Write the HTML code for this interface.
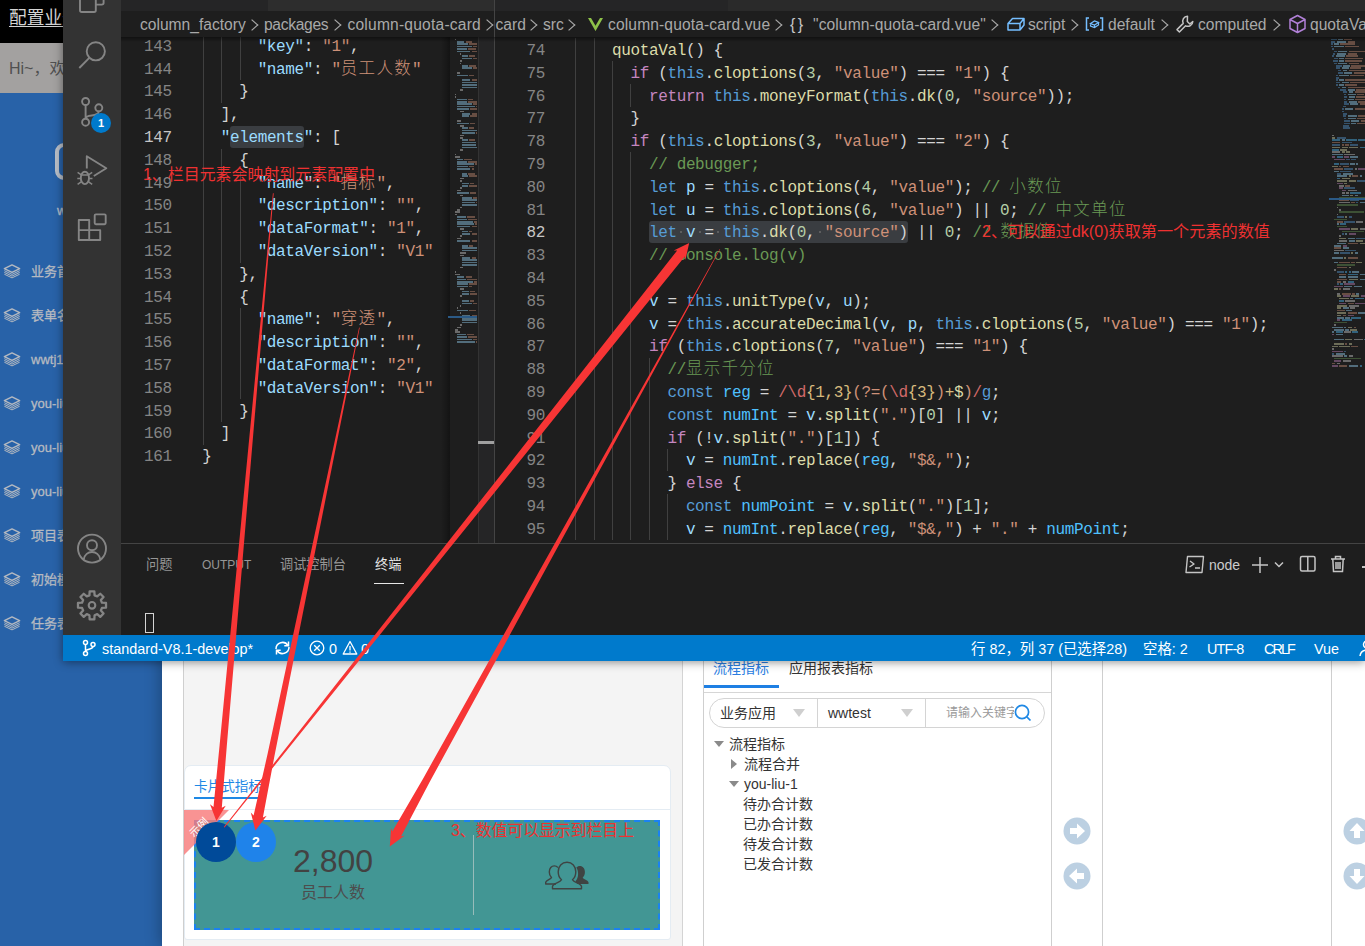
<!DOCTYPE html>
<html lang="zh-CN">
<head>
<meta charset="utf-8">
<title>column-quota-card</title>
<style>
html,body{margin:0;padding:0}
body{width:1365px;height:946px;overflow:hidden;position:relative;background:#fff;font-family:"Liberation Sans","Noto Sans CJK SC",sans-serif}
div,span,i,svg{box-sizing:border-box}
.abs{position:absolute}
/* ---------- web app behind ---------- */
#app{position:absolute;left:0;top:0;width:1365px;height:946px;overflow:hidden;background:#fff}
#topbar{position:absolute;left:0;top:0;width:1365px;height:43px;background:#000;color:#d4d4d4;font-size:17.7px;line-height:37px;text-decoration:underline;text-underline-offset:2px;padding-left:9px;white-space:nowrap}
#hibar{position:absolute;left:0;top:43px;width:1365px;height:49.500px;background:#a3a1a0;color:#505050;font-size:16px;line-height:51px;padding-left:9px;white-space:nowrap}
#side{position:absolute;left:0;top:92.500px;width:162px;height:854px;background:#2862a8}
.si{position:absolute;left:2px;height:20px;white-space:nowrap;color:#b6bac1;font-size:13px;line-height:20px;-webkit-text-stroke:.3px #b6bac1}
.si svg{position:absolute;left:.7px;top:3px}
.si span{position:absolute;left:29px;top:1px}
#dlg{position:absolute;left:162px;top:600px;width:1203px;height:346px;background:#fff;box-shadow:-2px 0 14px rgba(0,0,0,.28)}
.vline{position:absolute;top:0;width:1px;height:346px;background:#dcdfe3}
/* ---------- vscode ---------- */
#vsc{position:absolute;left:63px;top:0;width:1302px;height:661px;background:#1e1e1e;box-shadow:0 1px 9px rgba(0,0,0,.45);overflow:visible}
#vi{position:absolute;left:-63px;top:0;width:1365px;height:661px;overflow:hidden;font-family:"Liberation Sans","Noto Sans CJK SC",sans-serif}
#act{position:absolute;left:63px;top:0;width:58px;height:635px;background:#333}
#tabs{position:absolute;left:121px;top:0;width:1244px;height:11px;background:#252526}
#bc{position:absolute;left:121px;top:11px;width:1244px;height:26px;background:#1e1e1e}
.b{position:absolute;top:12px;height:26px;line-height:26px;font-size:15.6px;color:#a9a9a9;white-space:nowrap}
.cv{position:absolute;top:21.3px;width:8px;height:8px;border-right:1.6px solid #a9a9a9;border-top:1.6px solid #a9a9a9;transform:scaleX(1.15) rotate(45deg)}
.ln{position:absolute;width:60px;text-align:right;height:22.8px;line-height:22.8px;font-family:"Liberation Mono",monospace;font-size:16px;letter-spacing:-.362px;color:#858585;white-space:pre}
.ln.act{color:#c6c6c6}
.cl{position:absolute;height:22.8px;line-height:22.8px;font-family:"Liberation Mono","Noto Sans CJK SC",monospace;font-size:16px;letter-spacing:-.362px;color:#d4d4d4;white-space:pre}
.cl .k{color:#c586c0}.cl .t{color:#569cd6}.cl .f{color:#dcdcaa}.cl .v{color:#9cdcfe}.cl .c{color:#4fc1ff}
.cl .s{color:#ce9178}.cl .n{color:#b5cea8}.cl .m{color:#6a9955}.cl .r{color:#d16969}.cl .y{color:#d7ba7d}
.cl .S{color:#ce9178;font-size:16.5px;letter-spacing:1.3px;font-weight:300}
.cl .M{color:#6a9955;font-size:16.5px;letter-spacing:1.3px;font-weight:300}
.cl .h{color:#9cdcfe;background:#3a3d41;border-radius:3px;padding:3.3px 0 1.2px}
.ig{position:absolute;width:1px;background:#404040}
.wd{position:absolute;width:2px;height:2px;border-radius:1px;background:#6a6a6a}
.mm{position:absolute;left:0;top:0}
.mm i{position:absolute;height:1.7px;opacity:.42}
#edL{position:absolute;left:121px;top:37px;width:373px;height:506px;overflow:hidden;background:#1e1e1e}
#edR{position:absolute;left:495px;top:37px;width:870px;height:506px;overflow:hidden;background:#1e1e1e}
#edL .in,#edR .in{position:absolute;top:-37px}
#edL .in{left:-121px}
#edR .in{left:-495px}
#panel{position:absolute;left:121px;top:543px;width:1244px;height:92px;background:#1e1e1e;border-top:1px solid #444}
.pt{position:absolute;top:555px;height:20px;line-height:20px;font-size:13.2px;color:#969696;white-space:nowrap}
#status{position:absolute;left:63px;top:635px;width:1302px;height:26px;background:#007acc}
.st{position:absolute;top:636px;height:26px;line-height:26px;font-size:14.4px;color:#fff;white-space:nowrap}
#anno{position:absolute;left:0;top:0;width:1365px;height:946px;pointer-events:none}
</style>
</head>
<body>
<!-- =================== web application in the background =================== -->
<div id="app">
  <div id="topbar">配置业务</div>
  <div id="hibar">Hi~，欢迎</div>
  <div id="side">
    <div class="abs" style="left:55px;top:50px;width:40px;height:37px;border:4px solid #b9bfc8;border-radius:9px"></div>
    <div class="abs" style="left:57px;top:110px;color:#b3bcc9;font-size:13px;-webkit-text-stroke:.35px #b3bcc9">wwtj</div>
  </div>
<div class="si" style="top:261px"><svg width="18" height="14.500" viewBox="0 0 20 16.500" preserveAspectRatio="none"><path d="M10 1 L18.5 5.2 L10 9.4 L1.5 5.2 Z" fill="none" stroke="#b4b9c1" stroke-width="1.6" stroke-linejoin="round"/><path d="M1.500 7.600 L10 11.800 L18.500 7.600 M1.500 9.600 L10 13.800 L18.500 9.600 M1.500 11.600 L10 15.800 L18.500 11.600" fill="none" stroke="#b4b9c1" stroke-width="1.100" stroke-linejoin="round"/></svg><span>业务首页</span></div>
<div class="si" style="top:305px"><svg width="18" height="14.500" viewBox="0 0 20 16.500" preserveAspectRatio="none"><path d="M10 1 L18.5 5.2 L10 9.4 L1.5 5.2 Z" fill="none" stroke="#b4b9c1" stroke-width="1.6" stroke-linejoin="round"/><path d="M1.500 7.600 L10 11.800 L18.500 7.600 M1.500 9.600 L10 13.800 L18.500 9.600 M1.500 11.600 L10 15.800 L18.500 11.600" fill="none" stroke="#b4b9c1" stroke-width="1.100" stroke-linejoin="round"/></svg><span>表单名称</span></div>
<div class="si" style="top:349px"><svg width="18" height="14.500" viewBox="0 0 20 16.500" preserveAspectRatio="none"><path d="M10 1 L18.5 5.2 L10 9.4 L1.5 5.2 Z" fill="none" stroke="#b4b9c1" stroke-width="1.6" stroke-linejoin="round"/><path d="M1.500 7.600 L10 11.800 L18.500 7.600 M1.500 9.600 L10 13.800 L18.500 9.600 M1.500 11.600 L10 15.800 L18.500 11.600" fill="none" stroke="#b4b9c1" stroke-width="1.100" stroke-linejoin="round"/></svg><span>wwtj1</span></div>
<div class="si" style="top:393px"><svg width="18" height="14.500" viewBox="0 0 20 16.500" preserveAspectRatio="none"><path d="M10 1 L18.5 5.2 L10 9.4 L1.5 5.2 Z" fill="none" stroke="#b4b9c1" stroke-width="1.6" stroke-linejoin="round"/><path d="M1.500 7.600 L10 11.800 L18.500 7.600 M1.500 9.600 L10 13.800 L18.500 9.600 M1.500 11.600 L10 15.800 L18.500 11.600" fill="none" stroke="#b4b9c1" stroke-width="1.100" stroke-linejoin="round"/></svg><span>you-liu-1</span></div>
<div class="si" style="top:437px"><svg width="18" height="14.500" viewBox="0 0 20 16.500" preserveAspectRatio="none"><path d="M10 1 L18.5 5.2 L10 9.4 L1.5 5.2 Z" fill="none" stroke="#b4b9c1" stroke-width="1.6" stroke-linejoin="round"/><path d="M1.500 7.600 L10 11.800 L18.500 7.600 M1.500 9.600 L10 13.800 L18.500 9.600 M1.500 11.600 L10 15.800 L18.500 11.600" fill="none" stroke="#b4b9c1" stroke-width="1.100" stroke-linejoin="round"/></svg><span>you-liu-2</span></div>
<div class="si" style="top:481px"><svg width="18" height="14.500" viewBox="0 0 20 16.500" preserveAspectRatio="none"><path d="M10 1 L18.5 5.2 L10 9.4 L1.5 5.2 Z" fill="none" stroke="#b4b9c1" stroke-width="1.6" stroke-linejoin="round"/><path d="M1.500 7.600 L10 11.800 L18.500 7.600 M1.500 9.600 L10 13.800 L18.500 9.600 M1.500 11.600 L10 15.800 L18.500 11.600" fill="none" stroke="#b4b9c1" stroke-width="1.100" stroke-linejoin="round"/></svg><span>you-liu-3</span></div>
<div class="si" style="top:525px"><svg width="18" height="14.500" viewBox="0 0 20 16.500" preserveAspectRatio="none"><path d="M10 1 L18.5 5.2 L10 9.4 L1.5 5.2 Z" fill="none" stroke="#b4b9c1" stroke-width="1.6" stroke-linejoin="round"/><path d="M1.500 7.600 L10 11.800 L18.500 7.600 M1.500 9.600 L10 13.800 L18.500 9.600 M1.500 11.600 L10 15.800 L18.500 11.600" fill="none" stroke="#b4b9c1" stroke-width="1.100" stroke-linejoin="round"/></svg><span>项目表</span></div>
<div class="si" style="top:569px"><svg width="18" height="14.500" viewBox="0 0 20 16.500" preserveAspectRatio="none"><path d="M10 1 L18.5 5.2 L10 9.4 L1.5 5.2 Z" fill="none" stroke="#b4b9c1" stroke-width="1.6" stroke-linejoin="round"/><path d="M1.500 7.600 L10 11.800 L18.500 7.600 M1.500 9.600 L10 13.800 L18.500 9.600 M1.500 11.600 L10 15.800 L18.500 11.600" fill="none" stroke="#b4b9c1" stroke-width="1.100" stroke-linejoin="round"/></svg><span>初始模板</span></div>
<div class="si" style="top:613px"><svg width="18" height="14.500" viewBox="0 0 20 16.500" preserveAspectRatio="none"><path d="M10 1 L18.5 5.2 L10 9.4 L1.5 5.2 Z" fill="none" stroke="#b4b9c1" stroke-width="1.6" stroke-linejoin="round"/><path d="M1.500 7.600 L10 11.800 L18.500 7.600 M1.500 9.600 L10 13.800 L18.500 9.600 M1.500 11.600 L10 15.800 L18.500 11.600" fill="none" stroke="#b4b9c1" stroke-width="1.100" stroke-linejoin="round"/></svg><span>任务表</span></div>
  <div id="dlg">
    <!-- coordinates inside #dlg: screen x-162, screen y-600 -->
    <div class="abs" style="left:21px;top:0;width:500px;height:346px;background:#f4f4f4;border-left:1px solid #cfcfcf;border-right:1px solid #d4d4d4"></div>
    <div class="abs" style="left:541px;top:0;width:349px;height:346px;background:#fff;border-left:1px solid #cfcfcf;border-right:1px solid #cfcfcf"></div>
    
    <div class="abs" style="left:940px;top:0;width:230px;height:346px;background:#fff;border-left:1px solid #cfcfcf;border-right:1px solid #cfcfcf"></div>
    
  </div>

  <!-- card tab box -->
  <div class="abs" style="left:184px;top:765px;width:487px;height:175px;background:#fff;border:1px solid #e4ecf3;border-radius:7px 7px 3px 3px"></div>
  <div class="abs" style="left:194px;top:775.5px;font-size:13.6px;line-height:22px;color:#1e88e5;white-space:nowrap">卡片式指标</div>
  <div class="abs" style="left:194px;top:797px;width:70px;height:2px;background:#1e88e5"></div>
  <div class="abs" style="left:185px;top:809px;width:485px;height:1px;background:#e4ecf3"></div>
  <!-- teal card -->
  <div class="abs" style="left:194px;top:820px;width:466px;height:110px;background:#429694;border:2px dashed #1b82f1"></div>
  <div class="abs" style="left:243px;top:842px;width:180px;text-align:center;font-size:32px;line-height:38px;color:#424242;white-space:nowrap">2,800</div>
  <div class="abs" style="left:243px;top:880.5px;width:180px;text-align:center;font-size:16px;line-height:24px;color:#4d4d4d;white-space:nowrap">员工人数</div>
  <div class="abs" style="left:473px;top:835px;width:1px;height:80px;background:#97bcba"></div>
  <svg class="abs" style="left:545px;top:861px" width="44" height="29" viewBox="0 0 44 29" fill="none" stroke="#3f4443" stroke-width="1.400" stroke-linejoin="round">
    <path d="M32.500 23h11v-1.800c-.8-2.300-5-2.700-5.800-4.700c1.400-1.300 2.200-3.300 2.200-5.600c0-3.600-2.200-6-5-6c-1.500 0-2.700.6-3.600 1.600c1.300 2 1.800 4 1.800 6.500c0 3-1 5.500-2.500 7c.6 1.400 1.600 2 1.900 3z" fill="#3f4443" stroke="none"/>
    <path d="M11 23h-10.300v-1.800c.8-2.300 5-2.700 5.800-4.700c-1.400-1.300-2.200-3.300-2.200-5.600c0-3.600 2.200-6 5-6c1.500 0 2.700.6 3.600 1.600"/>
    <path d="M7.500 27.800v-2.200c0-3.300 7.500-3.800 9-6.800c-2-1.700-3.300-4.700-3.300-8c0-5.500 3.600-9.500 8.800-9.500s8.800 4 8.800 9.500c0 3.300-1.300 6.300-3.300 8c1.500 3 9 3.500 9 6.800v2.200z"/>
  </svg>
  <!-- sample ribbon -->
  <svg class="abs" style="left:184px;top:810px" width="46" height="46" viewBox="0 0 46 46"><polygon points="0,0 45,0 0,45" fill="#f87b7b" fill-opacity=".82"/><text x="0" y="0" transform="translate(10,28) rotate(-45)" font-size="11" fill="#fff" font-family="Liberation Sans, Noto Sans CJK SC, sans-serif">示例</text></svg>
  <!-- circles -->
  <div class="abs" style="left:196px;top:822px;width:40px;height:40px;border-radius:50%;background:#004a99;color:#fff;font-weight:bold;font-size:14px;line-height:40px;text-align:center">1</div>
  <div class="abs" style="left:236px;top:822px;width:40px;height:40px;border-radius:50%;background:#1f83ea;color:#fff;font-weight:bold;font-size:14px;line-height:40px;text-align:center">2</div>

  <!-- right panel -->
  <div class="abs" style="left:713px;top:657px;font-size:14px;line-height:22px;color:#2a7de1;white-space:nowrap">流程指标</div>
  <div class="abs" style="left:789px;top:657px;font-size:14px;line-height:22px;color:#333;white-space:nowrap">应用报表指标</div>
  <div class="abs" style="left:704px;top:685px;width:75px;height:3px;background:#1e7fe3"></div>
  <div class="abs" style="left:704px;top:692px;width:347px;height:1px;background:#d6d6d6"></div>
  <div class="abs" style="left:709px;top:698px;width:336px;height:30px;border:1px solid #d4d4d4;border-radius:15px;background:#fff"></div>
  <div class="abs" style="left:817px;top:699px;width:1px;height:28px;background:#d4d4d4"></div>
  <div class="abs" style="left:925px;top:699px;width:1px;height:28px;background:#d4d4d4"></div>
  <div class="abs" style="left:720px;top:702px;font-size:14px;line-height:22px;color:#333;white-space:nowrap">业务应用</div>
  <div class="abs" style="left:793px;top:709px;width:0;height:0;border-left:6.500px solid transparent;border-right:6.500px solid transparent;border-top:8px solid #cfcfcf"></div>
  <div class="abs" style="left:828px;top:702px;font-size:14px;line-height:22px;color:#333;white-space:nowrap">wwtest</div>
  <div class="abs" style="left:901px;top:709px;width:0;height:0;border-left:6.500px solid transparent;border-right:6.500px solid transparent;border-top:8px solid #cfcfcf"></div>
  <div class="abs" style="left:946px;top:702px;width:68px;overflow:hidden;font-size:12px;line-height:22px;color:#9a9a9a;white-space:nowrap">请输入关键字</div>
  <svg class="abs" style="left:1013px;top:703px" width="20" height="20" viewBox="0 0 20 20" fill="none" stroke="#1e88e5" stroke-width="1.7"><circle cx="9" cy="9" r="6.600"/><path d="M13.800 13.800L17.500 17.500"/></svg>
  <!-- tree -->
  <div class="abs" style="left:714px;top:741px;width:0;height:0;border-left:5px solid transparent;border-right:5px solid transparent;border-top:6px solid #8a8a8a"></div>
  <div class="abs" style="left:729px;top:733px;font-size:14px;line-height:22px;color:#333;white-space:nowrap">流程指标</div>
  <div class="abs" style="left:731px;top:759px;width:0;height:0;border-top:5px solid transparent;border-bottom:5px solid transparent;border-left:6px solid #8a8a8a"></div>
  <div class="abs" style="left:744px;top:753px;font-size:14px;line-height:22px;color:#333;white-space:nowrap">流程合并</div>
  <div class="abs" style="left:729px;top:781px;width:0;height:0;border-left:5px solid transparent;border-right:5px solid transparent;border-top:6px solid #8a8a8a"></div>
  <div class="abs" style="left:744px;top:773px;font-size:14px;line-height:22px;color:#333;white-space:nowrap">you-liu-1</div>
  <div class="abs" style="left:743px;top:793px;font-size:14px;line-height:22px;color:#333;white-space:nowrap">待办合计数</div>
  <div class="abs" style="left:743px;top:813px;font-size:14px;line-height:22px;color:#333;white-space:nowrap">已办合计数</div>
  <div class="abs" style="left:743px;top:833px;font-size:14px;line-height:22px;color:#333;white-space:nowrap">待发合计数</div>
  <div class="abs" style="left:743px;top:853px;font-size:14px;line-height:22px;color:#333;white-space:nowrap">已发合计数</div>
  <!-- move buttons -->
  <svg class="abs" style="left:1063px;top:817px" width="28" height="28" viewBox="0 0 28 28"><circle cx="14" cy="14" r="13.500" fill="#bcd0e2"/><path d="M7 11h7v-4.500l8 7.500l-8 7.500v-4.500h-7z" fill="#fff"/></svg>
  <svg class="abs" style="left:1063px;top:862px" width="28" height="28" viewBox="0 0 28 28"><circle cx="14" cy="14" r="13.500" fill="#bcd0e2"/><path d="M21 11h-7v-4.500l-8 7.500l8 7.500v-4.500h7z" fill="#fff"/></svg>
  <svg class="abs" style="left:1343px;top:817px" width="28" height="28" viewBox="0 0 28 28"><circle cx="14" cy="14" r="13.500" fill="#bcd0e2"/><path d="M11 21v-7h-4.500l7.500-8l7.500 8h-4.500v7z" fill="#fff"/></svg>
  <svg class="abs" style="left:1343px;top:862px" width="28" height="28" viewBox="0 0 28 28"><circle cx="14" cy="14" r="13.500" fill="#bcd0e2"/><path d="M11 7v7h-4.500l7.500 8l7.500-8h-4.500v-7z" fill="#fff"/></svg>
</div>

<!-- =================== VS Code window =================== -->
<div id="vsc"><div id="vi">
  <div id="act">
<svg class="abs" style="left:0;top:0" width="58" height="635" viewBox="0 0 58 635" fill="none" stroke="#858585" stroke-width="1.9" stroke-linejoin="round"><path d="M17 -12v22.2a1.800 1.800 0 0 0 1.800 1.800h12.200a1.800 1.800 0 0 0 1.800-1.800v-22"/><path d="M32.800 4.600h6a1.800 1.800 0 0 0 1.800-1.800v-16"/><circle cx="32.800" cy="51.300" r="9.100"/><path d="M26.300 57.800L16.300 68"/><circle cx="22.600" cy="101.500" r="3.500"/><circle cx="22.600" cy="122.200" r="3.500"/><circle cx="35.800" cy="107.800" r="3.500"/><path d="M22.600 105v13.700M35.800 111.300c0 6.500-13.200 2-13.200 7.400"/><path d="M23.800 168.500v-12.200l19.500 12l-12.500 7.700"/><ellipse cx="21.900" cy="177.900" rx="4.100" ry="6.200"/><path d="M17.800 175h8.200M14.600 172.400l3.400 2.200M14.300 178.400h3.500M14.600 184.400l3.600-2.600M29.200 172.400l-3.400 2.200M29.500 178.400h-3.500M29.200 184.400l-3.600-2.600" stroke-width="1.500"/><path d="M15.800 220h10.400v10.100h11v9.900h-21.400zM26.200 230.100v9.900M15.800 230.100h10.400"/><rect x="31.700" y="214.400" width="11" height="9.900" rx="1.200"/><circle cx="29" cy="548.600" r="14"/><circle cx="29" cy="545.300" r="5"/><path d="M20.700 559.500c.800-5 4.500-7.500 8.300-7.500s7.500 2.500 8.300 7.500"/><path d="M26.42 595.33L26.66 591.29L31.34 591.29L31.58 595.33L34.23 596.43L37.25 593.74L40.56 597.05L37.87 600.07L38.97 602.72L43.01 602.96L43.01 607.64L38.97 607.88L37.87 610.53L40.56 613.55L37.25 616.86L34.23 614.17L31.58 615.27L31.34 619.31L26.66 619.31L26.42 615.27L23.77 614.17L20.75 616.86L17.44 613.55L20.13 610.53L19.03 607.88L14.99 607.64L14.99 602.96L19.03 602.72L20.13 600.07L17.44 597.05L20.75 593.74L23.77 596.43Z" stroke-width="2.300"/><circle cx="29" cy="605.300" r="3.300" stroke-width="2.100"/></svg>
    <div class="abs" style="left:28px;top:113px;width:20px;height:20px;border-radius:50%;background:#007acc;color:#fff;font-size:11px;font-weight:bold;line-height:20px;text-align:center">1</div>
  </div>
  <div id="tabs">
    <div class="abs" style="left:147px;top:0;width:226px;height:11px;background:#2d2d2d"></div>
    <div class="abs" style="left:607px;top:0;width:637px;height:11px;background:#2a2a2a"></div>
  </div>
  <div id="bc"></div>
  <!-- breadcrumbs, left group -->
  <div class="abs" style="left:121px;top:11px;width:373px;height:26px;overflow:hidden">
   <div class="abs" style="left:-121px;top:-11px">
    <span class="b" style="left:140px">column_factory</span><i class="cv" style="left:247.6px"></i>
    <span class="b" style="left:264px;letter-spacing:-.3px">packages</span><i class="cv" style="left:330.6px"></i>
    <span class="b" style="left:347.5px;letter-spacing:.2px">column-quota-card</span><i class="cv" style="left:483.1px"></i>
   </div>
  </div>
  <!-- breadcrumbs, right group -->
  <div class="abs" style="left:495px;top:11px;width:870px;height:26px;overflow:hidden">
   <div class="abs" style="left:-495px;top:-11px">
    <span class="b" style="left:495.5px">card</span><i class="cv" style="left:526.6px"></i>
    <span class="b" style="left:543px">src</span><i class="cv" style="left:565.1px"></i>
    <svg class="abs" style="left:587.5px;top:17.5px" width="15" height="13.500" viewBox="0 0 19 17"><path d="M0 0h3.800l5.700 9.800l5.700-9.800h3.800l-9.500 16.500z" fill="#8dc149"/><path d="M5.600 0h2.600l1.300 2.300l1.300-2.300h2.600l-3.900 6.800z" fill="#1e1e1e"/></svg>
    <span class="b" style="left:608px;letter-spacing:.13px">column-quota-card.vue</span><i class="cv" style="left:772.1px"></i>
    <span class="b" style="left:790px;color:#c5c5c5;font-size:16px;letter-spacing:2.5px">{}</span>
    <span class="b" style="left:813px;letter-spacing:.1px">"column-quota-card.vue"</span><i class="cv" style="left:988.1px"></i>
    <svg class="abs" style="left:1006px;top:14px" width="20" height="20" viewBox="0 0 20 20" fill="none" stroke="#75beff" stroke-width="1.500" stroke-linejoin="round"><path d="M6.500 4.500h11.500l-4 5h-12zM2 9.500v6.500h12v-6.500M18 4.500v6.500l-4 5"/></svg>
    <span class="b" style="left:1028px">script</span><i class="cv" style="left:1067.9px"></i>
    <svg class="abs" style="left:1085px;top:15px" width="19" height="18" viewBox="0 0 19 18" fill="none" stroke="#75beff" stroke-width="1.500"><path d="M4 3h-2.500v12h2.500M15 3h2.500v12h-2.500"/><path d="M5.500 8.500l4-2.500l4 1.500l-4 2.500zM5.500 8.500v2.500l4 1.500l4-2.500v-2.500M9.500 10v2.500" stroke-width="1.200"/></svg>
    <span class="b" style="left:1108px">default</span><i class="cv" style="left:1157.6px"></i>
    <svg class="abs" style="left:1175px;top:14px" width="20" height="20" viewBox="0 0 20 20" fill="none" stroke="#c5c5c5" stroke-width="1.500" stroke-linejoin="round"><path d="M12.500 2.200a5 5 0 0 0-4.300 7.200l-6.200 6.200l2.400 2.400l6.200-6.200a5 5 0 0 0 7.200-4.300l-3 2.500l-2.500-2.500z"/></svg>
    <span class="b" style="left:1198px">computed</span><i class="cv" style="left:1270.2px"></i>
    <svg class="abs" style="left:1288px;top:14px" width="19" height="20" viewBox="0 0 19 20" fill="none" stroke="#b180d7" stroke-width="1.500" stroke-linejoin="round"><path d="M9.500 1.500l7.500 4v9l-7.500 4l-7.500-4v-9zM2 5.500l7.500 4l7.500-4M9.500 9.500v9"/></svg>
    <span class="b" style="left:1310px">quotaVal</span>
   </div>
  </div>
  <div class="abs" style="left:494px;top:0;width:1px;height:543px;background:#444"></div>

  <!-- left editor -->
  <div id="edL"><div class="in">
<i class="ig" style="left:202.5px;top:34.6px;height:410.4px"></i>
<i class="ig" style="left:221.0px;top:34.6px;height:68.4px"></i>
<i class="ig" style="left:221.0px;top:148.6px;height:273.6px"></i>
<i class="ig" style="left:239.5px;top:34.6px;height:45.6px"></i>
<i class="ig" style="left:239.5px;top:171.4px;height:91.2px"></i>
<i class="ig" style="left:239.5px;top:308.2px;height:91.2px"></i>
<div class="ln" style="top:35.8px;left:111.8px">143</div>
<div class="cl" style="top:35.8px;left:202.2px">      <span class="v">"key"</span>: <span class="s">"1"</span>,</div>
<div class="ln" style="top:58.6px;left:111.8px">144</div>
<div class="cl" style="top:58.6px;left:202.2px">      <span class="v">"name"</span>: <span class="s">"</span><span class="S">员工人数</span><span class="s">"</span></div>
<div class="ln" style="top:81.4px;left:111.8px">145</div>
<div class="cl" style="top:81.4px;left:202.2px">    }</div>
<div class="ln" style="top:104.2px;left:111.8px">146</div>
<div class="cl" style="top:104.2px;left:202.2px">  ],</div>
<div class="ln act" style="top:127.0px;left:111.8px">147</div>
<div class="cl" style="top:127.0px;left:202.2px">  <span class="v">"</span><span class="h">elements</span><span class="v">"</span>: [</div>
<div class="ln" style="top:149.8px;left:111.8px">148</div>
<div class="cl" style="top:149.8px;left:202.2px">    {</div>
<div class="ln" style="top:172.6px;left:111.8px">149</div>
<div class="cl" style="top:172.6px;left:202.2px">      <span class="v">"name"</span>: <span class="s">"</span><span class="S">指标</span><span class="s">"</span>,</div>
<div class="ln" style="top:195.4px;left:111.8px">150</div>
<div class="cl" style="top:195.4px;left:202.2px">      <span class="v">"description"</span>: <span class="s">""</span>,</div>
<div class="ln" style="top:218.2px;left:111.8px">151</div>
<div class="cl" style="top:218.2px;left:202.2px">      <span class="v">"dataFormat"</span>: <span class="s">"1"</span>,</div>
<div class="ln" style="top:241.0px;left:111.8px">152</div>
<div class="cl" style="top:241.0px;left:202.2px">      <span class="v">"dataVersion"</span>: <span class="s">"V1"</span></div>
<div class="ln" style="top:263.8px;left:111.8px">153</div>
<div class="cl" style="top:263.8px;left:202.2px">    },</div>
<div class="ln" style="top:286.6px;left:111.8px">154</div>
<div class="cl" style="top:286.6px;left:202.2px">    {</div>
<div class="ln" style="top:309.4px;left:111.8px">155</div>
<div class="cl" style="top:309.4px;left:202.2px">      <span class="v">"name"</span>: <span class="s">"</span><span class="S">穿透</span><span class="s">"</span>,</div>
<div class="ln" style="top:332.2px;left:111.8px">156</div>
<div class="cl" style="top:332.2px;left:202.2px">      <span class="v">"description"</span>: <span class="s">""</span>,</div>
<div class="ln" style="top:355.0px;left:111.8px">157</div>
<div class="cl" style="top:355.0px;left:202.2px">      <span class="v">"dataFormat"</span>: <span class="s">"2"</span>,</div>
<div class="ln" style="top:377.8px;left:111.8px">158</div>
<div class="cl" style="top:377.8px;left:202.2px">      <span class="v">"dataVersion"</span>: <span class="s">"V1"</span></div>
<div class="ln" style="top:400.6px;left:111.8px">159</div>
<div class="cl" style="top:400.6px;left:202.2px">    }</div>
<div class="ln" style="top:423.4px;left:111.8px">160</div>
<div class="cl" style="top:423.4px;left:202.2px">  ]</div>
<div class="ln" style="top:446.2px;left:111.8px">161</div>
<div class="cl" style="top:446.2px;left:202.2px">}</div>
    <div class="abs" style="left:441px;top:37px;width:9px;height:506px;background:linear-gradient(90deg,rgba(0,0,0,0),rgba(0,0,0,.35))"></div>
    <div class="abs" style="left:450px;top:37px;width:44px;height:506px;background:#1e1e1e"></div>
<div class="mm"><i style="left:454.8px;top:38.5px;width:1.2px;background:#d4d4d4"></i><i style="left:457.2px;top:40.9px;width:7.2px;background:#9cdcfe"></i><i style="left:465.6px;top:40.9px;width:6.0px;background:#ce9178"></i><i style="left:457.2px;top:43.3px;width:10.8px;background:#9cdcfe"></i><i style="left:469.2px;top:43.3px;width:7.8px;background:#ce9178"></i><i style="left:457.2px;top:45.7px;width:14.4px;background:#9cdcfe"></i><i style="left:472.8px;top:45.7px;width:4.2px;background:#ce9178"></i><i style="left:457.2px;top:48.1px;width:9.6px;background:#9cdcfe"></i><i style="left:468.0px;top:48.1px;width:8.4px;background:#ce9178"></i><i style="left:457.2px;top:50.5px;width:13.2px;background:#9cdcfe"></i><i style="left:471.6px;top:50.5px;width:5.4px;background:#ce9178"></i><i style="left:459.6px;top:52.9px;width:1.2px;background:#d4d4d4"></i><i style="left:462.0px;top:55.3px;width:6.0px;background:#9cdcfe"></i><i style="left:469.2px;top:55.3px;width:6.0px;background:#ce9178"></i><i style="left:462.0px;top:57.7px;width:9.6px;background:#9cdcfe"></i><i style="left:472.8px;top:57.7px;width:4.2px;background:#ce9178"></i><i style="left:459.6px;top:60.1px;width:2.4px;background:#d4d4d4"></i><i style="left:459.6px;top:62.5px;width:1.2px;background:#d4d4d4"></i><i style="left:462.0px;top:64.9px;width:6.0px;background:#9cdcfe"></i><i style="left:469.2px;top:64.9px;width:7.2px;background:#ce9178"></i><i style="left:462.0px;top:67.3px;width:9.6px;background:#9cdcfe"></i><i style="left:472.8px;top:67.3px;width:4.2px;background:#ce9178"></i><i style="left:457.2px;top:72.1px;width:2.4px;background:#d4d4d4"></i><i style="left:457.2px;top:74.5px;width:10.8px;background:#9cdcfe"></i><i style="left:469.2px;top:74.5px;width:4.8px;background:#ce9178"></i><i style="left:462.0px;top:79.3px;width:8.4px;background:#9cdcfe"></i><i style="left:471.6px;top:79.3px;width:5.4px;background:#ce9178"></i><i style="left:462.0px;top:81.7px;width:15.0px;background:#9cdcfe"></i><i style="left:462.0px;top:84.1px;width:15.0px;background:#9cdcfe"></i><i style="left:462.0px;top:86.5px;width:15.0px;background:#9cdcfe"></i><i style="left:459.6px;top:88.9px;width:3.6px;background:#d4d4d4"></i><i style="left:454.8px;top:93.7px;width:1.2px;background:#d4d4d4"></i><i style="left:454.8px;top:96.1px;width:1.2px;background:#d4d4d4"></i><i style="left:457.2px;top:98.5px;width:9.6px;background:#9cdcfe"></i><i style="left:468.0px;top:98.5px;width:4.8px;background:#ce9178"></i><i style="left:457.2px;top:100.9px;width:9.6px;background:#9cdcfe"></i><i style="left:468.0px;top:100.9px;width:9.0px;background:#ce9178"></i><i style="left:457.2px;top:103.3px;width:14.4px;background:#9cdcfe"></i><i style="left:472.8px;top:103.3px;width:4.2px;background:#ce9178"></i><i style="left:457.2px;top:105.7px;width:18.0px;background:#9cdcfe"></i><i style="left:476.4px;top:105.7px;width:0.6px;background:#ce9178"></i><i style="left:457.2px;top:108.1px;width:12.0px;background:#9cdcfe"></i><i style="left:470.4px;top:108.1px;width:6.6px;background:#ce9178"></i><i style="left:459.6px;top:110.5px;width:4.8px;background:#d4d4d4"></i><i style="left:462.0px;top:112.9px;width:8.4px;background:#9cdcfe"></i><i style="left:471.6px;top:112.9px;width:5.4px;background:#ce9178"></i><i style="left:462.0px;top:115.3px;width:7.2px;background:#9cdcfe"></i><i style="left:470.4px;top:115.3px;width:6.6px;background:#ce9178"></i><i style="left:457.2px;top:120.1px;width:3.6px;background:#d4d4d4"></i><i style="left:457.2px;top:122.5px;width:12.0px;background:#9cdcfe"></i><i style="left:470.4px;top:122.5px;width:4.8px;background:#ce9178"></i><i style="left:459.6px;top:124.9px;width:4.8px;background:#d4d4d4"></i><i style="left:462.0px;top:127.3px;width:6.0px;background:#9cdcfe"></i><i style="left:469.2px;top:127.3px;width:4.8px;background:#ce9178"></i><i style="left:462.0px;top:129.7px;width:15.0px;background:#9cdcfe"></i><i style="left:462.0px;top:132.1px;width:13.2px;background:#9cdcfe"></i><i style="left:476.4px;top:132.1px;width:0.6px;background:#ce9178"></i><i style="left:459.6px;top:134.5px;width:4.8px;background:#d4d4d4"></i><i style="left:459.6px;top:136.9px;width:3.6px;background:#d4d4d4"></i><i style="left:462.0px;top:139.3px;width:6.0px;background:#9cdcfe"></i><i style="left:469.2px;top:139.3px;width:6.0px;background:#ce9178"></i><i style="left:462.0px;top:141.7px;width:14.4px;background:#9cdcfe"></i><i style="left:462.0px;top:144.1px;width:14.4px;background:#9cdcfe"></i><i style="left:462.0px;top:146.5px;width:15.0px;background:#9cdcfe"></i><i style="left:459.6px;top:148.9px;width:3.6px;background:#d4d4d4"></i><i style="left:454.8px;top:153.7px;width:1.2px;background:#d4d4d4"></i><i style="left:454.8px;top:156.1px;width:4.8px;background:#d4d4d4"></i><i style="left:457.2px;top:158.5px;width:6.0px;background:#9cdcfe"></i><i style="left:464.4px;top:158.5px;width:7.2px;background:#ce9178"></i><i style="left:457.2px;top:160.9px;width:9.6px;background:#9cdcfe"></i><i style="left:468.0px;top:160.9px;width:9.0px;background:#ce9178"></i><i style="left:457.2px;top:163.3px;width:16.8px;background:#9cdcfe"></i><i style="left:475.2px;top:163.3px;width:1.8px;background:#ce9178"></i><i style="left:457.2px;top:165.7px;width:10.8px;background:#9cdcfe"></i><i style="left:469.2px;top:165.7px;width:4.8px;background:#ce9178"></i><i style="left:457.2px;top:168.1px;width:13.2px;background:#9cdcfe"></i><i style="left:471.6px;top:168.1px;width:2.4px;background:#ce9178"></i><i style="left:462.0px;top:172.9px;width:4.8px;background:#9cdcfe"></i><i style="left:468.0px;top:172.9px;width:7.2px;background:#ce9178"></i><i style="left:462.0px;top:175.3px;width:6.0px;background:#9cdcfe"></i><i style="left:469.2px;top:175.3px;width:7.8px;background:#ce9178"></i><i style="left:459.6px;top:177.7px;width:4.8px;background:#d4d4d4"></i><i style="left:459.6px;top:180.1px;width:2.4px;background:#d4d4d4"></i><i style="left:462.0px;top:182.5px;width:7.2px;background:#9cdcfe"></i><i style="left:470.4px;top:182.5px;width:3.6px;background:#ce9178"></i><i style="left:462.0px;top:184.9px;width:6.0px;background:#9cdcfe"></i><i style="left:469.2px;top:184.9px;width:7.8px;background:#ce9178"></i><i style="left:459.6px;top:187.3px;width:2.4px;background:#d4d4d4"></i><i style="left:457.2px;top:189.7px;width:3.6px;background:#d4d4d4"></i><i style="left:457.2px;top:192.1px;width:12.0px;background:#9cdcfe"></i><i style="left:470.4px;top:192.1px;width:6.0px;background:#ce9178"></i><i style="left:459.6px;top:194.5px;width:3.6px;background:#d4d4d4"></i><i style="left:462.0px;top:196.9px;width:9.6px;background:#9cdcfe"></i><i style="left:472.8px;top:196.9px;width:4.2px;background:#ce9178"></i><i style="left:462.0px;top:199.3px;width:15.0px;background:#9cdcfe"></i><i style="left:462.0px;top:201.7px;width:13.2px;background:#9cdcfe"></i><i style="left:476.4px;top:201.7px;width:0.6px;background:#ce9178"></i><i style="left:462.0px;top:204.1px;width:15.0px;background:#9cdcfe"></i><i style="left:459.6px;top:206.5px;width:2.4px;background:#d4d4d4"></i><i style="left:457.2px;top:208.9px;width:2.4px;background:#d4d4d4"></i><i style="left:454.8px;top:211.3px;width:4.8px;background:#d4d4d4"></i><i style="left:454.8px;top:213.7px;width:2.4px;background:#d4d4d4"></i><i style="left:457.2px;top:216.1px;width:8.4px;background:#9cdcfe"></i><i style="left:466.8px;top:216.1px;width:8.4px;background:#ce9178"></i><i style="left:457.2px;top:218.5px;width:9.6px;background:#9cdcfe"></i><i style="left:468.0px;top:218.5px;width:9.0px;background:#ce9178"></i><i style="left:457.2px;top:220.9px;width:15.6px;background:#9cdcfe"></i><i style="left:474.0px;top:220.9px;width:3.0px;background:#ce9178"></i><i style="left:457.2px;top:223.3px;width:16.8px;background:#9cdcfe"></i><i style="left:475.2px;top:223.3px;width:1.8px;background:#ce9178"></i><i style="left:457.2px;top:225.7px;width:13.2px;background:#9cdcfe"></i><i style="left:471.6px;top:225.7px;width:5.4px;background:#ce9178"></i><i style="left:459.6px;top:228.1px;width:4.8px;background:#d4d4d4"></i><i style="left:462.0px;top:230.5px;width:6.0px;background:#9cdcfe"></i><i style="left:469.2px;top:230.5px;width:2.4px;background:#ce9178"></i><i style="left:462.0px;top:232.9px;width:8.4px;background:#9cdcfe"></i><i style="left:471.6px;top:232.9px;width:5.4px;background:#ce9178"></i><i style="left:459.6px;top:235.3px;width:2.4px;background:#d4d4d4"></i><i style="left:457.2px;top:237.7px;width:3.6px;background:#d4d4d4"></i><i style="left:457.2px;top:240.1px;width:13.2px;background:#9cdcfe"></i><i style="left:471.6px;top:240.1px;width:5.4px;background:#ce9178"></i><i style="left:462.0px;top:244.9px;width:6.0px;background:#9cdcfe"></i><i style="left:469.2px;top:244.9px;width:3.6px;background:#ce9178"></i><i style="left:462.0px;top:247.3px;width:15.0px;background:#9cdcfe"></i><i style="left:462.0px;top:249.7px;width:15.0px;background:#9cdcfe"></i><i style="left:459.6px;top:252.1px;width:6.0px;background:#d4d4d4"></i><i style="left:459.6px;top:254.5px;width:4.8px;background:#d4d4d4"></i><i style="left:462.0px;top:256.9px;width:8.4px;background:#9cdcfe"></i><i style="left:471.6px;top:256.9px;width:4.8px;background:#ce9178"></i><i style="left:462.0px;top:259.3px;width:15.0px;background:#9cdcfe"></i><i style="left:462.0px;top:261.7px;width:15.0px;background:#9cdcfe"></i><i style="left:462.0px;top:264.1px;width:15.0px;background:#9cdcfe"></i><i style="left:459.6px;top:266.5px;width:3.6px;background:#d4d4d4"></i><i style="left:454.8px;top:271.3px;width:1.2px;background:#d4d4d4"></i><i style="left:454.8px;top:273.7px;width:4.8px;background:#d4d4d4"></i><i style="left:457.2px;top:276.1px;width:7.2px;background:#9cdcfe"></i><i style="left:465.6px;top:276.1px;width:6.0px;background:#ce9178"></i><i style="left:457.2px;top:278.5px;width:8.4px;background:#9cdcfe"></i><i style="left:466.8px;top:278.5px;width:10.2px;background:#ce9178"></i><i style="left:457.2px;top:280.9px;width:15.6px;background:#9cdcfe"></i><i style="left:474.0px;top:280.9px;width:3.0px;background:#ce9178"></i><i style="left:457.2px;top:283.3px;width:10.8px;background:#9cdcfe"></i><i style="left:469.2px;top:283.3px;width:7.8px;background:#ce9178"></i><i style="left:457.2px;top:285.7px;width:10.8px;background:#9cdcfe"></i><i style="left:469.2px;top:285.7px;width:2.4px;background:#ce9178"></i><i style="left:459.6px;top:288.1px;width:4.8px;background:#d4d4d4"></i><i style="left:462.0px;top:290.5px;width:7.2px;background:#9cdcfe"></i><i style="left:470.4px;top:290.5px;width:4.8px;background:#ce9178"></i><i style="left:462.0px;top:292.9px;width:7.2px;background:#9cdcfe"></i><i style="left:470.4px;top:292.9px;width:6.6px;background:#ce9178"></i><i style="left:459.6px;top:295.3px;width:2.4px;background:#d4d4d4"></i><i style="left:462.0px;top:300.1px;width:7.2px;background:#9cdcfe"></i><i style="left:470.4px;top:300.1px;width:3.6px;background:#ce9178"></i><i style="left:462.0px;top:302.5px;width:9.6px;background:#9cdcfe"></i><i style="left:472.8px;top:302.5px;width:4.2px;background:#ce9178"></i><i style="left:459.6px;top:304.9px;width:1.2px;background:#d4d4d4"></i><i style="left:457.2px;top:307.3px;width:1.2px;background:#d4d4d4"></i><i style="left:457.2px;top:309.7px;width:10.8px;background:#9cdcfe"></i><i style="left:469.2px;top:309.7px;width:7.2px;background:#ce9178"></i><i style="left:459.6px;top:312.1px;width:1.2px;background:#d4d4d4"></i><i style="left:462.0px;top:314.5px;width:8.4px;background:#9cdcfe"></i><i style="left:471.6px;top:314.5px;width:5.4px;background:#ce9178"></i><i style="left:462.0px;top:316.9px;width:15.0px;background:#9cdcfe"></i><i style="left:462.0px;top:319.3px;width:15.0px;background:#9cdcfe"></i><i style="left:462.0px;top:321.7px;width:15.0px;background:#9cdcfe"></i><i style="left:459.6px;top:324.1px;width:2.4px;background:#d4d4d4"></i><i style="left:457.2px;top:326.5px;width:3.6px;background:#d4d4d4"></i><i style="left:454.8px;top:328.9px;width:3.6px;background:#d4d4d4"></i><i style="left:454.8px;top:331.3px;width:4.8px;background:#d4d4d4"></i><i style="left:457.2px;top:333.7px;width:8.4px;background:#9cdcfe"></i><i style="left:466.8px;top:333.7px;width:7.2px;background:#ce9178"></i><i style="left:457.2px;top:336.1px;width:9.6px;background:#9cdcfe"></i><i style="left:468.0px;top:336.1px;width:9.0px;background:#ce9178"></i><i style="left:457.2px;top:338.5px;width:14.4px;background:#9cdcfe"></i><i style="left:472.8px;top:338.5px;width:4.2px;background:#ce9178"></i><i style="left:457.2px;top:340.9px;width:18.0px;background:#9cdcfe"></i><i style="left:476.4px;top:340.9px;width:0.6px;background:#ce9178"></i></div>
    <div class="abs" style="left:448px;top:316px;width:29px;height:2px;background:#2b5a86"></div>
    <div class="abs" style="left:478px;top:37px;width:16px;height:506px;background:#252526;border-left:1px solid #333"></div>
    <div class="abs" style="left:478px;top:441px;width:16px;height:3px;background:#a0a0a0"></div>
  </div></div>

  <!-- right editor -->
  <div id="edR"><div class="in">
    <div class="abs" style="left:649px;top:220.7px;width:259px;height:22.800px;background:#3a3d41;border-radius:3px"></div>
<i class="wd" style="left:680.3px;top:231.1px"></i><i class="wd" style="left:698.7px;top:231.1px"></i><i class="wd" style="left:717.2px;top:231.1px"></i><i class="wd" style="left:818.9px;top:231.1px"></i>
<i class="ig" style="left:575.0px;top:38.3px;height:501.6px"></i>
<i class="ig" style="left:593.5px;top:38.3px;height:501.6px"></i>
<i class="ig" style="left:612.0px;top:61.1px;height:478.8px"></i>
<i class="ig" style="left:630.4px;top:83.9px;height:22.8px"></i>
<i class="ig" style="left:630.4px;top:152.3px;height:387.6px"></i>
<i class="ig" style="left:648.9px;top:357.5px;height:182.4px"></i>
<i class="ig" style="left:667.4px;top:448.7px;height:22.8px"></i>
<i class="ig" style="left:667.4px;top:494.3px;height:45.6px"></i>
<div class="ln" style="top:40.0px;left:485.0px">74</div>
<div class="cl" style="top:40.0px;left:575.0px">    <span class="f">quotaVal</span>() {</div>
<div class="ln" style="top:62.8px;left:485.0px">75</div>
<div class="cl" style="top:62.8px;left:575.0px">      <span class="k">if</span> (<span class="t">this</span>.<span class="f">cloptions</span>(<span class="n">3</span>, <span class="s">"value"</span>) === <span class="s">"1"</span>) {</div>
<div class="ln" style="top:85.6px;left:485.0px">76</div>
<div class="cl" style="top:85.6px;left:575.0px">        <span class="k">return</span> <span class="t">this</span>.<span class="f">moneyFormat</span>(<span class="t">this</span>.<span class="f">dk</span>(<span class="n">0</span>, <span class="s">"source"</span>));</div>
<div class="ln" style="top:108.4px;left:485.0px">77</div>
<div class="cl" style="top:108.4px;left:575.0px">      }</div>
<div class="ln" style="top:131.2px;left:485.0px">78</div>
<div class="cl" style="top:131.2px;left:575.0px">      <span class="k">if</span> (<span class="t">this</span>.<span class="f">cloptions</span>(<span class="n">3</span>, <span class="s">"value"</span>) === <span class="s">"2"</span>) {</div>
<div class="ln" style="top:154.0px;left:485.0px">79</div>
<div class="cl" style="top:154.0px;left:575.0px">        <span class="m">// debugger;</span></div>
<div class="ln" style="top:176.8px;left:485.0px">80</div>
<div class="cl" style="top:176.8px;left:575.0px">        <span class="t">let</span> <span class="v">p</span> = <span class="t">this</span>.<span class="f">cloptions</span>(<span class="n">4</span>, <span class="s">"value"</span>); <span class="m">// </span><span class="M">小数位</span></div>
<div class="ln" style="top:199.6px;left:485.0px">81</div>
<div class="cl" style="top:199.6px;left:575.0px">        <span class="t">let</span> <span class="v">u</span> = <span class="t">this</span>.<span class="f">cloptions</span>(<span class="n">6</span>, <span class="s">"value"</span>) || <span class="n">0</span>; <span class="m">// </span><span class="M">中文单位</span></div>
<div class="ln act" style="top:222.4px;left:485.0px">82</div>
<div class="cl" style="top:222.4px;left:575.0px">        <span class="t">let</span> <span class="v">v</span> = <span class="t">this</span>.<span class="f">dk</span>(<span class="n">0</span>, <span class="s">"source"</span>) || <span class="n">0</span>; <span class="m">// </span><span class="M">数据值</span></div>
<div class="ln" style="top:245.2px;left:485.0px">83</div>
<div class="cl" style="top:245.2px;left:575.0px">        <span class="m">// console.log(v)</span></div>
<div class="ln" style="top:268.0px;left:485.0px">84</div>
<div class="cl" style="top:268.0px;left:575.0px"></div>
<div class="ln" style="top:290.8px;left:485.0px">85</div>
<div class="cl" style="top:290.8px;left:575.0px">        <span class="v">v</span> = <span class="t">this</span>.<span class="f">unitType</span>(<span class="v">v</span>, <span class="v">u</span>);</div>
<div class="ln" style="top:313.6px;left:485.0px">86</div>
<div class="cl" style="top:313.6px;left:575.0px">        <span class="v">v</span> = <span class="t">this</span>.<span class="f">accurateDecimal</span>(<span class="v">v</span>, <span class="v">p</span>, <span class="t">this</span>.<span class="f">cloptions</span>(<span class="n">5</span>, <span class="s">"value"</span>) === <span class="s">"1"</span>);</div>
<div class="ln" style="top:336.4px;left:485.0px">87</div>
<div class="cl" style="top:336.4px;left:575.0px">        <span class="k">if</span> (<span class="t">this</span>.<span class="f">cloptions</span>(<span class="n">7</span>, <span class="s">"value"</span>) === <span class="s">"1"</span>) {</div>
<div class="ln" style="top:359.2px;left:485.0px">88</div>
<div class="cl" style="top:359.2px;left:575.0px">          <span class="m">//</span><span class="M">显示千分位</span></div>
<div class="ln" style="top:382.0px;left:485.0px">89</div>
<div class="cl" style="top:382.0px;left:575.0px">          <span class="t">const</span> <span class="c">reg</span> = <span class="r">/\d</span><span class="y">{1,3}</span><span class="s">(?=(</span><span class="r">\d</span><span class="y">{3}</span><span class="s">)</span><span class="y">+</span><span class="f">$</span><span class="s">)</span><span class="r">/</span><span class="t">g</span>;</div>
<div class="ln" style="top:404.8px;left:485.0px">90</div>
<div class="cl" style="top:404.8px;left:575.0px">          <span class="t">const</span> <span class="c">numInt</span> = <span class="v">v</span>.<span class="f">split</span>(<span class="s">"."</span>)[<span class="n">0</span>] || <span class="v">v</span>;</div>
<div class="ln" style="top:427.6px;left:485.0px">91</div>
<div class="cl" style="top:427.6px;left:575.0px">          <span class="k">if</span> (!<span class="v">v</span>.<span class="f">split</span>(<span class="s">"."</span>)[<span class="n">1</span>]) {</div>
<div class="ln" style="top:450.4px;left:485.0px">92</div>
<div class="cl" style="top:450.4px;left:575.0px">            <span class="v">v</span> = <span class="c">numInt</span>.<span class="f">replace</span>(<span class="c">reg</span>, <span class="s">"$&amp;,"</span>);</div>
<div class="ln" style="top:473.2px;left:485.0px">93</div>
<div class="cl" style="top:473.2px;left:575.0px">          } <span class="k">else</span> {</div>
<div class="ln" style="top:496.0px;left:485.0px">94</div>
<div class="cl" style="top:496.0px;left:575.0px">            <span class="t">const</span> <span class="c">numPoint</span> = <span class="v">v</span>.<span class="f">split</span>(<span class="s">"."</span>)[<span class="n">1</span>];</div>
<div class="ln" style="top:518.8px;left:485.0px">95</div>
<div class="cl" style="top:518.8px;left:575.0px">            <span class="v">v</span> = <span class="c">numInt</span>.<span class="f">replace</span>(<span class="c">reg</span>, <span class="s">"$&amp;,"</span>) + <span class="s">"."</span> + <span class="c">numPoint</span>;</div>
    <div class="abs" style="left:1329px;top:37px;width:36px;height:506px;background:#1e1e1e"></div>
<div class="mm"><i style="left:1330.7px;top:38.5px;width:6.0px;background:#569cd6"></i><i style="left:1337.9px;top:38.5px;width:4.8px;background:#9cdcfe"></i><i style="left:1343.9px;top:38.5px;width:8.4px;background:#ce9178"></i><i style="left:1330.7px;top:40.9px;width:4.8px;background:#569cd6"></i><i style="left:1336.7px;top:40.9px;width:9.6px;background:#9cdcfe"></i><i style="left:1347.5px;top:40.9px;width:7.2px;background:#ce9178"></i><i style="left:1330.7px;top:43.3px;width:2.4px;background:#569cd6"></i><i style="left:1334.3px;top:43.3px;width:4.8px;background:#9cdcfe"></i><i style="left:1340.3px;top:43.3px;width:14.4px;background:#ce9178"></i><i style="left:1330.7px;top:45.7px;width:2.4px;background:#569cd6"></i><i style="left:1334.3px;top:45.7px;width:9.6px;background:#9cdcfe"></i><i style="left:1345.1px;top:45.7px;width:14.4px;background:#ce9178"></i><i style="left:1331.9px;top:48.1px;width:2.4px;background:#569cd6"></i><i style="left:1334.3px;top:50.5px;width:2.4px;background:#569cd6"></i><i style="left:1337.9px;top:50.5px;width:9.6px;background:#9cdcfe"></i><i style="left:1348.7px;top:50.5px;width:16.8px;background:#ce9178"></i><i style="left:1333.1px;top:52.9px;width:2.4px;background:#569cd6"></i><i style="left:1336.7px;top:52.9px;width:9.6px;background:#9cdcfe"></i><i style="left:1347.5px;top:52.9px;width:9.6px;background:#ce9178"></i><i style="left:1331.9px;top:55.3px;width:2.4px;background:#569cd6"></i><i style="left:1335.5px;top:55.3px;width:9.6px;background:#9cdcfe"></i><i style="left:1346.3px;top:55.3px;width:12.0px;background:#ce9178"></i><i style="left:1334.3px;top:57.7px;width:3.6px;background:#569cd6"></i><i style="left:1339.1px;top:57.7px;width:4.8px;background:#9cdcfe"></i><i style="left:1345.1px;top:57.7px;width:18.0px;background:#ce9178"></i><i style="left:1333.1px;top:60.1px;width:4.8px;background:#569cd6"></i><i style="left:1339.1px;top:60.1px;width:4.8px;background:#9cdcfe"></i><i style="left:1345.1px;top:60.1px;width:16.8px;background:#ce9178"></i><i style="left:1334.3px;top:62.5px;width:2.4px;background:#569cd6"></i><i style="left:1337.9px;top:62.5px;width:9.6px;background:#9cdcfe"></i><i style="left:1348.7px;top:62.5px;width:10.8px;background:#ce9178"></i><i style="left:1335.5px;top:64.9px;width:6.0px;background:#569cd6"></i><i style="left:1342.7px;top:64.9px;width:7.2px;background:#9cdcfe"></i><i style="left:1351.1px;top:64.9px;width:14.4px;background:#ce9178"></i><i style="left:1335.5px;top:67.3px;width:4.8px;background:#569cd6"></i><i style="left:1341.5px;top:67.3px;width:7.2px;background:#9cdcfe"></i><i style="left:1349.9px;top:67.3px;width:10.8px;background:#ce9178"></i><i style="left:1337.9px;top:69.7px;width:3.6px;background:#569cd6"></i><i style="left:1342.7px;top:69.7px;width:4.8px;background:#9cdcfe"></i><i style="left:1348.7px;top:69.7px;width:16.8px;background:#ce9178"></i><i style="left:1337.9px;top:72.1px;width:4.8px;background:#569cd6"></i><i style="left:1343.9px;top:72.1px;width:8.4px;background:#9cdcfe"></i><i style="left:1353.5px;top:72.1px;width:12.0px;background:#ce9178"></i><i style="left:1335.5px;top:74.5px;width:2.4px;background:#569cd6"></i><i style="left:1339.1px;top:74.5px;width:9.6px;background:#9cdcfe"></i><i style="left:1349.9px;top:74.5px;width:14.4px;background:#ce9178"></i><i style="left:1335.5px;top:76.9px;width:3.6px;background:#569cd6"></i><i style="left:1335.5px;top:79.3px;width:2.4px;background:#569cd6"></i><i style="left:1339.1px;top:79.3px;width:4.8px;background:#9cdcfe"></i><i style="left:1345.1px;top:79.3px;width:20.4px;background:#ce9178"></i><i style="left:1335.5px;top:81.7px;width:4.8px;background:#569cd6"></i><i style="left:1341.5px;top:81.7px;width:7.2px;background:#9cdcfe"></i><i style="left:1349.9px;top:81.7px;width:15.6px;background:#ce9178"></i><i style="left:1335.5px;top:84.1px;width:2.4px;background:#569cd6"></i><i style="left:1339.1px;top:84.1px;width:4.8px;background:#9cdcfe"></i><i style="left:1345.1px;top:84.1px;width:12.0px;background:#ce9178"></i><i style="left:1337.9px;top:86.5px;width:2.4px;background:#569cd6"></i><i style="left:1341.5px;top:86.5px;width:4.8px;background:#9cdcfe"></i><i style="left:1347.5px;top:86.5px;width:18.0px;background:#ce9178"></i><i style="left:1340.3px;top:88.9px;width:6.0px;background:#569cd6"></i><i style="left:1347.5px;top:88.9px;width:7.2px;background:#9cdcfe"></i><i style="left:1355.9px;top:88.9px;width:9.6px;background:#ce9178"></i><i style="left:1342.7px;top:91.3px;width:4.8px;background:#569cd6"></i><i style="left:1348.7px;top:91.3px;width:4.8px;background:#9cdcfe"></i><i style="left:1354.7px;top:91.3px;width:10.8px;background:#ce9178"></i><i style="left:1343.9px;top:93.7px;width:2.4px;background:#569cd6"></i><i style="left:1347.5px;top:93.7px;width:8.4px;background:#9cdcfe"></i><i style="left:1357.1px;top:93.7px;width:7.2px;background:#ce9178"></i><i style="left:1343.9px;top:96.1px;width:3.6px;background:#569cd6"></i><i style="left:1348.7px;top:96.1px;width:6.0px;background:#9cdcfe"></i><i style="left:1355.9px;top:96.1px;width:9.6px;background:#ce9178"></i><i style="left:1343.9px;top:98.5px;width:2.4px;background:#569cd6"></i><i style="left:1347.5px;top:98.5px;width:6.0px;background:#9cdcfe"></i><i style="left:1354.7px;top:98.5px;width:10.8px;background:#ce9178"></i><i style="left:1343.9px;top:100.9px;width:3.6px;background:#569cd6"></i><i style="left:1348.7px;top:100.9px;width:8.4px;background:#9cdcfe"></i><i style="left:1358.3px;top:100.9px;width:7.2px;background:#ce9178"></i><i style="left:1343.9px;top:103.3px;width:4.8px;background:#569cd6"></i><i style="left:1349.9px;top:103.3px;width:8.4px;background:#9cdcfe"></i><i style="left:1359.5px;top:103.3px;width:6.0px;background:#ce9178"></i><i style="left:1342.7px;top:105.7px;width:3.6px;background:#569cd6"></i><i style="left:1341.5px;top:108.1px;width:2.4px;background:#569cd6"></i><i style="left:1345.1px;top:108.1px;width:8.4px;background:#9cdcfe"></i><i style="left:1354.7px;top:108.1px;width:10.8px;background:#ce9178"></i><i style="left:1341.5px;top:110.5px;width:2.4px;background:#569cd6"></i><i style="left:1342.7px;top:112.9px;width:4.8px;background:#569cd6"></i><i style="left:1342.7px;top:115.3px;width:3.6px;background:#569cd6"></i><i style="left:1347.5px;top:115.3px;width:9.6px;background:#9cdcfe"></i><i style="left:1358.3px;top:115.3px;width:7.2px;background:#ce9178"></i><i style="left:1343.9px;top:117.7px;width:2.4px;background:#569cd6"></i><i style="left:1347.5px;top:117.7px;width:8.4px;background:#9cdcfe"></i><i style="left:1357.1px;top:117.7px;width:8.4px;background:#ce9178"></i><i style="left:1343.9px;top:120.1px;width:6.0px;background:#569cd6"></i><i style="left:1351.1px;top:120.1px;width:8.4px;background:#9cdcfe"></i><i style="left:1360.7px;top:120.1px;width:4.8px;background:#ce9178"></i><i style="left:1343.9px;top:122.5px;width:6.0px;background:#569cd6"></i><i style="left:1351.1px;top:122.5px;width:4.8px;background:#9cdcfe"></i><i style="left:1357.1px;top:122.5px;width:8.4px;background:#ce9178"></i><i style="left:1342.7px;top:124.9px;width:6.0px;background:#569cd6"></i><i style="left:1342.7px;top:127.3px;width:7.2px;background:#569cd6"></i><i style="left:1331.9px;top:134.5px;width:1.8px;background:#d4d4d4"></i><i style="left:1331.9px;top:136.9px;width:3.6px;background:#dcdcaa"></i><i style="left:1336.7px;top:136.9px;width:9.6px;background:#569cd6"></i><i style="left:1331.9px;top:139.3px;width:8.4px;background:#4fc1ff"></i><i style="left:1341.5px;top:139.3px;width:3.6px;background:#9cdcfe"></i><i style="left:1346.3px;top:139.3px;width:10.8px;background:#4fc1ff"></i><i style="left:1358.3px;top:139.3px;width:7.2px;background:#4fc1ff"></i><i style="left:1331.9px;top:141.7px;width:8.4px;background:#ce9178"></i><i style="left:1341.5px;top:141.7px;width:10.8px;background:#569cd6"></i><i style="left:1331.9px;top:144.1px;width:8.4px;background:#569cd6"></i><i style="left:1341.5px;top:144.1px;width:2.4px;background:#ce9178"></i><i style="left:1345.1px;top:144.1px;width:3.6px;background:#ce9178"></i><i style="left:1349.9px;top:144.1px;width:8.4px;background:#569cd6"></i><i style="left:1331.9px;top:146.5px;width:8.4px;background:#dcdcaa"></i><i style="left:1341.5px;top:146.5px;width:6.0px;background:#dcdcaa"></i><i style="left:1348.7px;top:146.5px;width:9.6px;background:#dcdcaa"></i><i style="left:1359.5px;top:146.5px;width:6.0px;background:#4fc1ff"></i><i style="left:1331.9px;top:148.9px;width:7.2px;background:#4fc1ff"></i><i style="left:1340.3px;top:148.9px;width:7.2px;background:#dcdcaa"></i><i style="left:1331.9px;top:151.3px;width:8.4px;background:#d4d4d4"></i><i style="left:1341.5px;top:151.3px;width:3.6px;background:#dcdcaa"></i><i style="left:1346.3px;top:151.3px;width:3.6px;background:#dcdcaa"></i><i style="left:1331.9px;top:153.7px;width:10.8px;background:#9cdcfe"></i><i style="left:1343.9px;top:153.7px;width:10.8px;background:#d4d4d4"></i><i style="left:1331.9px;top:156.1px;width:3.6px;background:#c586c0"></i><i style="left:1336.7px;top:156.1px;width:6.0px;background:#4fc1ff"></i><i style="left:1343.9px;top:156.1px;width:4.8px;background:#c586c0"></i><i style="left:1349.9px;top:156.1px;width:8.4px;background:#9cdcfe"></i><i style="left:1334.3px;top:158.5px;width:10.8px;background:#c586c0"></i><i style="left:1346.3px;top:158.5px;width:3.6px;background:#569cd6"></i><i style="left:1351.1px;top:158.5px;width:4.8px;background:#569cd6"></i><i style="left:1334.3px;top:163.3px;width:4.8px;background:#4fc1ff"></i><i style="left:1340.3px;top:163.3px;width:8.4px;background:#569cd6"></i><i style="left:1349.9px;top:163.3px;width:4.8px;background:#9cdcfe"></i><i style="left:1355.9px;top:163.3px;width:2.4px;background:#9cdcfe"></i><i style="left:1331.9px;top:165.7px;width:6.0px;background:#dcdcaa"></i><i style="left:1339.1px;top:165.7px;width:2.4px;background:#ce9178"></i><i style="left:1342.7px;top:165.7px;width:6.0px;background:#ce9178"></i><i style="left:1334.3px;top:168.1px;width:8.4px;background:#ce9178"></i><i style="left:1343.9px;top:168.1px;width:9.6px;background:#569cd6"></i><i style="left:1354.7px;top:168.1px;width:2.4px;background:#d4d4d4"></i><i style="left:1358.3px;top:168.1px;width:7.2px;background:#c586c0"></i><i style="left:1334.3px;top:170.5px;width:4.8px;background:#9cdcfe"></i><i style="left:1340.3px;top:170.5px;width:10.8px;background:#569cd6"></i><i style="left:1336.7px;top:172.9px;width:4.8px;background:#569cd6"></i><i style="left:1342.7px;top:172.9px;width:10.8px;background:#9cdcfe"></i><i style="left:1336.7px;top:175.3px;width:10.8px;background:#9cdcfe"></i><i style="left:1348.7px;top:175.3px;width:2.4px;background:#dcdcaa"></i><i style="left:1352.3px;top:175.3px;width:6.0px;background:#ce9178"></i><i style="left:1359.5px;top:175.3px;width:2.4px;background:#9cdcfe"></i><i style="left:1336.7px;top:177.7px;width:3.6px;background:#4fc1ff"></i><i style="left:1341.5px;top:177.7px;width:8.4px;background:#dcdcaa"></i><i style="left:1336.7px;top:180.1px;width:10.8px;background:#dcdcaa"></i><i style="left:1348.7px;top:180.1px;width:7.2px;background:#dcdcaa"></i><i style="left:1357.1px;top:180.1px;width:8.4px;background:#569cd6"></i><i style="left:1336.7px;top:182.5px;width:6.0px;background:#c586c0"></i><i style="left:1343.9px;top:182.5px;width:3.6px;background:#dcdcaa"></i><i style="left:1339.1px;top:184.9px;width:4.8px;background:#d4d4d4"></i><i style="left:1345.1px;top:184.9px;width:4.8px;background:#ce9178"></i><i style="left:1339.1px;top:187.3px;width:3.6px;background:#c586c0"></i><i style="left:1343.9px;top:187.3px;width:10.8px;background:#569cd6"></i><i style="left:1341.5px;top:189.7px;width:4.8px;background:#c586c0"></i><i style="left:1347.5px;top:189.7px;width:9.6px;background:#d4d4d4"></i><i style="left:1341.5px;top:192.1px;width:3.6px;background:#d4d4d4"></i><i style="left:1346.3px;top:192.1px;width:2.4px;background:#d4d4d4"></i><i style="left:1349.9px;top:192.1px;width:10.8px;background:#4fc1ff"></i><i style="left:1341.5px;top:194.5px;width:7.2px;background:#9cdcfe"></i><i style="left:1349.9px;top:194.5px;width:3.6px;background:#dcdcaa"></i><i style="left:1354.7px;top:194.5px;width:3.6px;background:#9cdcfe"></i><i style="left:1339.1px;top:196.9px;width:26.4px;background:#6a9955"></i><i style="left:1339.1px;top:199.3px;width:9.6px;background:#ce9178"></i><i style="left:1349.9px;top:199.3px;width:9.6px;background:#569cd6"></i><i style="left:1339.1px;top:201.7px;width:10.8px;background:#d4d4d4"></i><i style="left:1351.1px;top:201.7px;width:3.6px;background:#ce9178"></i><i style="left:1355.9px;top:201.7px;width:2.4px;background:#569cd6"></i><i style="left:1359.5px;top:201.7px;width:6.0px;background:#9cdcfe"></i><i style="left:1336.7px;top:204.1px;width:21.6px;background:#6a9955"></i><i style="left:1336.7px;top:206.5px;width:1.8px;background:#d4d4d4"></i><i style="left:1339.1px;top:208.9px;width:1.8px;background:#d4d4d4"></i><i style="left:1339.1px;top:211.3px;width:25.2px;background:#6a9955"></i><i style="left:1336.7px;top:213.7px;width:1.8px;background:#d4d4d4"></i><i style="left:1336.7px;top:216.1px;width:7.2px;background:#569cd6"></i><i style="left:1345.1px;top:216.1px;width:2.4px;background:#dcdcaa"></i><i style="left:1348.7px;top:216.1px;width:3.6px;background:#569cd6"></i><i style="left:1334.3px;top:218.5px;width:13.2px;background:#6a9955"></i><i style="left:1336.7px;top:220.9px;width:6.0px;background:#ce9178"></i><i style="left:1343.9px;top:220.9px;width:10.8px;background:#569cd6"></i><i style="left:1355.9px;top:220.9px;width:7.2px;background:#d4d4d4"></i><i style="left:1336.7px;top:223.3px;width:2.4px;background:#9cdcfe"></i><i style="left:1340.3px;top:223.3px;width:6.0px;background:#4fc1ff"></i><i style="left:1336.7px;top:225.7px;width:10.8px;background:#6a9955"></i><i style="left:1339.1px;top:228.1px;width:10.8px;background:#c586c0"></i><i style="left:1351.1px;top:228.1px;width:7.2px;background:#dcdcaa"></i><i style="left:1359.5px;top:228.1px;width:6.0px;background:#d4d4d4"></i><i style="left:1341.5px;top:230.5px;width:22.8px;background:#6a9955"></i><i style="left:1341.5px;top:232.9px;width:2.4px;background:#569cd6"></i><i style="left:1345.1px;top:232.9px;width:2.4px;background:#9cdcfe"></i><i style="left:1348.7px;top:232.9px;width:7.2px;background:#c586c0"></i><i style="left:1339.1px;top:235.3px;width:1.8px;background:#d4d4d4"></i><i style="left:1339.1px;top:237.7px;width:7.2px;background:#dcdcaa"></i><i style="left:1347.5px;top:237.7px;width:7.2px;background:#9cdcfe"></i><i style="left:1355.9px;top:237.7px;width:9.6px;background:#569cd6"></i><i style="left:1339.1px;top:240.1px;width:8.4px;background:#d4d4d4"></i><i style="left:1348.7px;top:240.1px;width:6.0px;background:#9cdcfe"></i><i style="left:1355.9px;top:240.1px;width:7.2px;background:#dcdcaa"></i><i style="left:1336.7px;top:242.5px;width:9.6px;background:#9cdcfe"></i><i style="left:1347.5px;top:242.5px;width:10.8px;background:#ce9178"></i><i style="left:1359.5px;top:242.5px;width:6.0px;background:#dcdcaa"></i><i style="left:1334.3px;top:244.9px;width:7.2px;background:#9cdcfe"></i><i style="left:1342.7px;top:244.9px;width:4.8px;background:#c586c0"></i><i style="left:1334.3px;top:247.3px;width:7.2px;background:#ce9178"></i><i style="left:1342.7px;top:247.3px;width:6.0px;background:#9cdcfe"></i><i style="left:1334.3px;top:249.7px;width:9.6px;background:#d4d4d4"></i><i style="left:1345.1px;top:249.7px;width:10.8px;background:#569cd6"></i><i style="left:1334.3px;top:252.1px;width:4.8px;background:#9cdcfe"></i><i style="left:1340.3px;top:252.1px;width:9.6px;background:#569cd6"></i><i style="left:1351.1px;top:252.1px;width:2.4px;background:#dcdcaa"></i><i style="left:1354.7px;top:252.1px;width:3.6px;background:#9cdcfe"></i><i style="left:1331.9px;top:256.9px;width:10.8px;background:#9cdcfe"></i><i style="left:1343.9px;top:256.9px;width:2.4px;background:#dcdcaa"></i><i style="left:1347.5px;top:256.9px;width:10.8px;background:#ce9178"></i><i style="left:1334.3px;top:261.7px;width:3.6px;background:#9cdcfe"></i><i style="left:1339.1px;top:261.7px;width:10.8px;background:#ce9178"></i><i style="left:1351.1px;top:261.7px;width:3.6px;background:#ce9178"></i><i style="left:1355.9px;top:261.7px;width:6.0px;background:#dcdcaa"></i><i style="left:1336.7px;top:264.1px;width:18.0px;background:#6a9955"></i><i style="left:1336.7px;top:266.5px;width:10.8px;background:#ce9178"></i><i style="left:1348.7px;top:266.5px;width:2.4px;background:#dcdcaa"></i><i style="left:1334.3px;top:268.9px;width:1.8px;background:#d4d4d4"></i><i style="left:1336.7px;top:271.3px;width:7.2px;background:#569cd6"></i><i style="left:1345.1px;top:271.3px;width:2.4px;background:#4fc1ff"></i><i style="left:1348.7px;top:271.3px;width:2.4px;background:#4fc1ff"></i><i style="left:1352.3px;top:271.3px;width:7.2px;background:#9cdcfe"></i><i style="left:1339.1px;top:273.7px;width:7.2px;background:#ce9178"></i><i style="left:1347.5px;top:273.7px;width:10.8px;background:#4fc1ff"></i><i style="left:1359.5px;top:273.7px;width:6.0px;background:#9cdcfe"></i><i style="left:1339.1px;top:276.1px;width:7.2px;background:#9cdcfe"></i><i style="left:1347.5px;top:276.1px;width:10.8px;background:#9cdcfe"></i><i style="left:1336.7px;top:278.5px;width:10.8px;background:#ce9178"></i><i style="left:1348.7px;top:278.5px;width:9.6px;background:#dcdcaa"></i><i style="left:1359.5px;top:278.5px;width:6.0px;background:#9cdcfe"></i><i style="left:1336.7px;top:280.9px;width:4.8px;background:#ce9178"></i><i style="left:1342.7px;top:280.9px;width:3.6px;background:#d4d4d4"></i><i style="left:1347.5px;top:280.9px;width:6.0px;background:#4fc1ff"></i><i style="left:1336.7px;top:283.3px;width:2.4px;background:#569cd6"></i><i style="left:1340.3px;top:283.3px;width:2.4px;background:#4fc1ff"></i><i style="left:1343.9px;top:283.3px;width:10.8px;background:#c586c0"></i><i style="left:1334.3px;top:285.7px;width:8.4px;background:#c586c0"></i><i style="left:1343.9px;top:285.7px;width:8.4px;background:#9cdcfe"></i><i style="left:1353.5px;top:285.7px;width:8.4px;background:#9cdcfe"></i><i style="left:1334.3px;top:288.1px;width:3.6px;background:#dcdcaa"></i><i style="left:1339.1px;top:288.1px;width:2.4px;background:#ce9178"></i><i style="left:1342.7px;top:288.1px;width:7.2px;background:#d4d4d4"></i><i style="left:1336.7px;top:292.9px;width:3.6px;background:#d4d4d4"></i><i style="left:1341.5px;top:292.9px;width:9.6px;background:#ce9178"></i><i style="left:1352.3px;top:292.9px;width:2.4px;background:#ce9178"></i><i style="left:1355.9px;top:292.9px;width:3.6px;background:#9cdcfe"></i><i style="left:1336.7px;top:295.3px;width:4.8px;background:#dcdcaa"></i><i style="left:1342.7px;top:295.3px;width:7.2px;background:#c586c0"></i><i style="left:1351.1px;top:295.3px;width:8.4px;background:#dcdcaa"></i><i style="left:1360.7px;top:295.3px;width:4.8px;background:#c586c0"></i><i style="left:1339.1px;top:297.7px;width:9.6px;background:#dcdcaa"></i><i style="left:1349.9px;top:297.7px;width:3.6px;background:#9cdcfe"></i><i style="left:1354.7px;top:297.7px;width:9.6px;background:#4fc1ff"></i><i style="left:1339.1px;top:300.1px;width:4.8px;background:#4fc1ff"></i><i style="left:1345.1px;top:300.1px;width:9.6px;background:#d4d4d4"></i><i style="left:1339.1px;top:302.5px;width:7.2px;background:#c586c0"></i><i style="left:1347.5px;top:302.5px;width:6.0px;background:#ce9178"></i><i style="left:1354.7px;top:302.5px;width:10.8px;background:#c586c0"></i><i style="left:1336.7px;top:304.9px;width:10.8px;background:#dcdcaa"></i><i style="left:1348.7px;top:304.9px;width:10.8px;background:#d4d4d4"></i><i style="left:1336.7px;top:307.3px;width:4.8px;background:#dcdcaa"></i><i style="left:1342.7px;top:307.3px;width:6.0px;background:#9cdcfe"></i><i style="left:1349.9px;top:307.3px;width:4.8px;background:#d4d4d4"></i><i style="left:1336.7px;top:309.7px;width:8.4px;background:#ce9178"></i><i style="left:1346.3px;top:309.7px;width:6.0px;background:#9cdcfe"></i><i style="left:1336.7px;top:312.1px;width:9.6px;background:#dcdcaa"></i><i style="left:1347.5px;top:312.1px;width:9.6px;background:#ce9178"></i><i style="left:1358.3px;top:312.1px;width:7.2px;background:#9cdcfe"></i><i style="left:1336.7px;top:314.5px;width:4.8px;background:#dcdcaa"></i><i style="left:1342.7px;top:314.5px;width:3.6px;background:#ce9178"></i><i style="left:1347.5px;top:314.5px;width:6.0px;background:#c586c0"></i><i style="left:1336.7px;top:316.9px;width:7.2px;background:#9cdcfe"></i><i style="left:1345.1px;top:316.9px;width:4.8px;background:#9cdcfe"></i><i style="left:1351.1px;top:316.9px;width:9.6px;background:#4fc1ff"></i><i style="left:1336.7px;top:319.3px;width:3.6px;background:#c586c0"></i><i style="left:1341.5px;top:319.3px;width:10.8px;background:#4fc1ff"></i><i style="left:1334.3px;top:321.7px;width:13.2px;background:#6a9955"></i><i style="left:1334.3px;top:324.1px;width:1.8px;background:#d4d4d4"></i><i style="left:1331.9px;top:326.5px;width:10.8px;background:#9cdcfe"></i><i style="left:1343.9px;top:326.5px;width:2.4px;background:#9cdcfe"></i><i style="left:1347.5px;top:326.5px;width:4.8px;background:#dcdcaa"></i><i style="left:1353.5px;top:326.5px;width:2.4px;background:#ce9178"></i><i style="left:1334.3px;top:328.9px;width:9.6px;background:#9cdcfe"></i><i style="left:1345.1px;top:328.9px;width:3.6px;background:#9cdcfe"></i><i style="left:1349.9px;top:328.9px;width:7.2px;background:#dcdcaa"></i><i style="left:1331.9px;top:331.3px;width:2.4px;background:#9cdcfe"></i><i style="left:1335.5px;top:331.3px;width:7.2px;background:#4fc1ff"></i><i style="left:1343.9px;top:331.3px;width:7.2px;background:#d4d4d4"></i><i style="left:1352.3px;top:331.3px;width:6.0px;background:#4fc1ff"></i><i style="left:1331.9px;top:333.7px;width:2.4px;background:#c586c0"></i><i style="left:1335.5px;top:333.7px;width:7.2px;background:#9cdcfe"></i><i style="left:1334.3px;top:338.5px;width:9.6px;background:#9cdcfe"></i><i style="left:1345.1px;top:338.5px;width:7.2px;background:#dcdcaa"></i><i style="left:1353.5px;top:338.5px;width:9.6px;background:#d4d4d4"></i><i style="left:1364.3px;top:338.5px;width:1.2px;background:#4fc1ff"></i><i style="left:1334.3px;top:343.3px;width:9.6px;background:#dcdcaa"></i><i style="left:1345.1px;top:343.3px;width:2.4px;background:#ce9178"></i><i style="left:1348.7px;top:343.3px;width:3.6px;background:#dcdcaa"></i><i style="left:1331.9px;top:345.7px;width:6.0px;background:#dcdcaa"></i><i style="left:1339.1px;top:345.7px;width:10.8px;background:#dcdcaa"></i><i style="left:1351.1px;top:345.7px;width:7.2px;background:#ce9178"></i><i style="left:1331.9px;top:348.1px;width:1.8px;background:#d4d4d4"></i><i style="left:1331.9px;top:350.5px;width:10.8px;background:#c586c0"></i><i style="left:1343.9px;top:350.5px;width:2.4px;background:#569cd6"></i><i style="left:1331.9px;top:352.9px;width:2.4px;background:#569cd6"></i><i style="left:1335.5px;top:352.9px;width:9.6px;background:#9cdcfe"></i><i style="left:1331.9px;top:355.3px;width:10.8px;background:#d4d4d4"></i><i style="left:1343.9px;top:355.3px;width:3.6px;background:#9cdcfe"></i><i style="left:1348.7px;top:355.3px;width:4.8px;background:#d4d4d4"></i><i style="left:1334.3px;top:357.7px;width:26.4px;background:#6a9955"></i><i style="left:1334.3px;top:360.1px;width:7.2px;background:#c586c0"></i><i style="left:1342.7px;top:360.1px;width:8.4px;background:#d4d4d4"></i><i style="left:1331.9px;top:362.5px;width:3.6px;background:#ce9178"></i><i style="left:1336.7px;top:362.5px;width:3.6px;background:#d4d4d4"></i><i style="left:1331.9px;top:364.9px;width:6.0px;background:#c586c0"></i><i style="left:1339.1px;top:364.9px;width:8.4px;background:#ce9178"></i><i style="left:1348.7px;top:364.9px;width:9.6px;background:#9cdcfe"></i><i style="left:1359.5px;top:364.9px;width:2.4px;background:#4fc1ff"></i></div>
    <div class="abs" style="left:1329px;top:198px;width:36px;height:2px;background:#2b5a86"></div>
  </div></div>
  <div class="abs" style="left:121px;top:37px;width:1244px;height:5px;background:linear-gradient(180deg,rgba(0,0,0,.45),rgba(0,0,0,0))"></div>

  <!-- panel -->
  <div id="panel"></div>
  <span class="pt" style="left:146px">问题</span>
  <span class="pt" style="left:202px;font-size:12px">OUTPUT</span>
  <span class="pt" style="left:280px">调试控制台</span>
  <span class="pt" style="left:375px;color:#e7e7e7">终端</span>
  <div class="abs" style="left:374px;top:583px;width:30px;height:1px;background:#e7e7e7"></div>
  <div class="abs" style="left:145px;top:613px;width:9px;height:20px;border:1px solid #d4d4d4"></div>
  <svg class="abs" style="left:1185px;top:555px" width="20" height="19" viewBox="0 0 20 19" fill="none" stroke="#c5c5c5" stroke-width="1.400" stroke-linejoin="round"><path d="M2.500 1.500h16l-1.500 16h-16z"/><path d="M5 6l4 3l-4.500 3M10 13h5"/></svg>
  <span class="pt" style="left:1209px;color:#ccc;font-size:14px">node</span>
  <svg class="abs" style="left:1251px;top:556px" width="34" height="18" viewBox="0 0 34 18" fill="none" stroke="#c5c5c5" stroke-width="1.500"><path d="M9 1v16M1 9h16M24 6.500l4 4l4-4" /></svg>
  <svg class="abs" style="left:1299px;top:555px" width="18" height="18" viewBox="0 0 18 18" fill="none" stroke="#c5c5c5" stroke-width="1.500"><rect x="1.500" y="1.500" width="14.500" height="14.500" rx="1.500"/><path d="M8.800 1.500v14.500"/></svg>
  <svg class="abs" style="left:1330px;top:555px" width="16" height="18" viewBox="0 0 16 18" fill="none" stroke="#c5c5c5" stroke-width="1.500"><path d="M1 4h14M5.500 4v-2.500h5v2.500M2.800 4l.7 12.500h9l.7-12.500M6 7v7M8 7v7M10 7v7"/></svg>

  <div class="abs" style="left:1361.500px;top:566px;width:4px;height:1.500px;background:#c5c5c5"></div>
  <!-- status bar -->
  <div id="status"></div>
  <svg class="abs" style="left:81px;top:639px" width="16" height="18" viewBox="0 0 16 18" fill="none" stroke="#fff" stroke-width="1.500"><circle cx="4.500" cy="3.500" r="2"/><circle cx="4.500" cy="14.500" r="2"/><circle cx="12" cy="5.500" r="2"/><path d="M4.500 5.500v7M12 7.500c0 3.500-7.500 2-7.500 5"/></svg>
  <span class="st" style="left:102px">standard-V8.1-develop*</span>
  <svg class="abs" style="left:273px;top:639px" width="19" height="18" viewBox="0 0 19 18" fill="none" stroke="#fff" stroke-width="1.500"><path d="M3 10a6.500 6.500 0 0 1 12-3.500M16 8a6.500 6.500 0 0 1-12 3.500"/><path d="M15.500 2.500v4.200h-4.200M3.500 15.500v-4.200h4.200"/></svg>
  <svg class="abs" style="left:309px;top:640px" width="16" height="16" viewBox="0 0 16 16" fill="none" stroke="#fff" stroke-width="1.300"><circle cx="8" cy="8" r="6.800"/><path d="M5.200 5.200l5.600 5.600M10.800 5.200l-5.600 5.600"/></svg>
  <span class="st" style="left:329px">0</span>
  <svg class="abs" style="left:342px;top:640px" width="16" height="16" viewBox="0 0 16 16" fill="none" stroke="#fff" stroke-width="1.300" stroke-linejoin="round"><path d="M8 1.500l6.800 12.500h-13.600z"/><path d="M8 6v4.500M8 11.500v1.200"/></svg>
  <span class="st" style="left:361px">0</span>
  <span class="st" style="left:971px">行 82，列 37 (已选择28)</span>
  <span class="st" style="left:1143px">空格: 2</span>
  <span class="st" style="left:1207px;letter-spacing:-.85px">UTF-8</span>
  <span class="st" style="left:1264px;letter-spacing:-1.9px">CRLF</span>
  <span class="st" style="left:1314px">Vue</span>
  <svg class="abs" style="left:1357.5px;top:639px" width="18" height="18" viewBox="0 0 18 18" fill="none" stroke="#fff" stroke-width="1.500"><circle cx="9" cy="5.500" r="3.500"/><path d="M2 17c.5-4 3-6 7-6"/></svg>
</div></div>

<!-- =================== red annotations =================== -->
<svg id="anno" width="1365" height="946" viewBox="0 0 1365 946">
  <g fill="#f73535">
<polygon points="272.9,193.3 219.6,745.3 213.5,807.0 210.0,804.3 216.4,820.9 225.7,805.7 221.8,807.7 226.8,745.9 273.7,193.3"/>
<polygon points="359.1,327.5 267.5,754.3 253.6,815.6 250.8,812.5 255.4,830.4 266.7,815.8 262.9,817.5 274.5,755.7 359.7,327.7"/>
<polygon points="224.6,827.6 627.4,327.5 684.8,256.4 685.4,259.9 689.2,243.1 673.7,250.6 677.2,250.4 620.8,322.3 223.8,827.0"/>
<polygon points="719.8,248.9 422.9,778.9 392.3,831.6 391.1,828.0 389.8,846.4 404.7,835.6 401.0,836.4 429.4,782.5 720.2,249.1"/>
  </g>
  <g fill="#ee3131" font-family="Liberation Sans, Noto Sans CJK SC, sans-serif" font-size="16">
    <text x="143" y="180" textLength="232" lengthAdjust="spacingAndGlyphs">1、栏目元素会映射到元素配置中</text>
    <text x="982" y="237" textLength="288" lengthAdjust="spacingAndGlyphs">2、可以通过dk(0)获取第一个元素的数值</text>
    <text x="451" y="836" textLength="183" lengthAdjust="spacingAndGlyphs">3、数值可以显示到栏目上</text>
  </g>
</svg>
</body>
</html>
